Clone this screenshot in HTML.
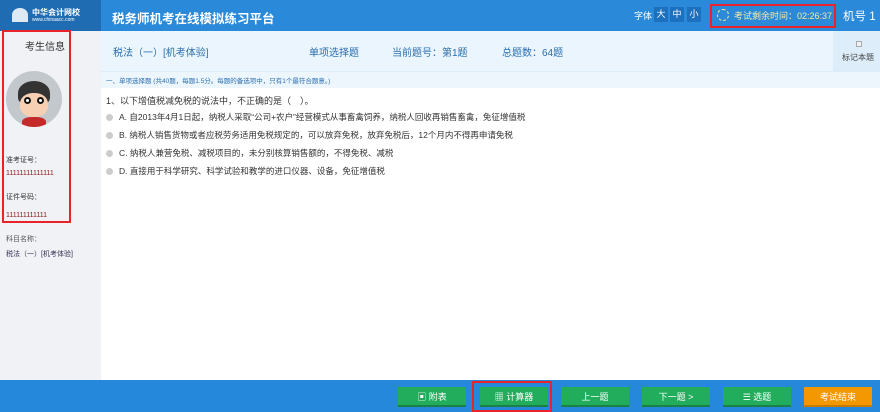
<!DOCTYPE html>
<html><head><meta charset="utf-8"><style>
*{margin:0;padding:0;box-sizing:border-box}
body{width:880px;height:412px;overflow:hidden;font-family:"Liberation Sans","Noto Sans CJK SC",sans-serif;background:#fff;position:relative;font-size:9px;color:#333}
.abs{position:absolute}
.hdr{left:0;top:0;width:880px;height:31px;background:#2a8ad9}
.logo{left:0;top:0;width:101px;height:31px;background:#1f6cb3}
.side{left:0;top:31px;width:101px;height:349px;background:#f0f2f5}
.bar{left:101px;top:31px;width:779px;height:40px;background:#eaf5fd;color:#2a6eb0;font-size:10px}
.sub{left:101px;top:71px;width:779px;height:17px;background:#eef6fd;border-top:1px solid #dcecf8;color:#2a6eb0;font-size:6.5px}
.foot{left:0;top:380px;width:880px;height:32px;background:#2688da}
.btn{position:absolute;top:387px;height:20px;width:68px;background:#22ad5c;color:#fff;font-size:9px;text-align:center;line-height:20px;border-bottom:2px solid #1b7f48}
.red{position:absolute;border:2px solid #e8242a}
.opt{left:106px;font-size:8.5px;color:#333}
.rad{display:inline-block;width:7px;height:7px;border-radius:50%;background:#ccc;margin-right:6px;vertical-align:-1px}
</style></head><body>
<div class="abs hdr"></div>
<div class="abs logo"></div>
<div class="abs" style="left:12px;top:8px;width:16px;height:14px;border-radius:50% 50% 0 0;background:#fff;opacity:.85"></div>
<div class="abs" style="left:32px;top:7px;color:#fff;font-size:8px;font-weight:bold">中华会计网校</div>
<div class="abs" style="left:32px;top:17px;color:#fff;font-size:5px">www.chinaacc.com</div>
<div class="abs" style="left:112px;top:8px;color:#fff;font-size:12.5px;font-weight:bold">税务师机考在线模拟练习平台</div>
<div class="abs" style="left:634px;top:9px;color:#fff;font-size:9px">字体</div>
<div class="abs" style="left:654px;top:7px;width:14px;height:15px;background:#1d70bd;color:#fff;font-size:9px;text-align:center;line-height:15px">大</div>
<div class="abs" style="left:670px;top:7px;width:14px;height:15px;background:#1d70bd;color:#fff;font-size:9px;text-align:center;line-height:15px">中</div>
<div class="abs" style="left:687px;top:7px;width:14px;height:15px;background:#1d70bd;color:#fff;font-size:9px;text-align:center;line-height:15px">小</div>
<div class="abs" style="left:717px;top:9px;width:12px;height:12px;border:1px dashed #f2e7a0;border-radius:50%"></div>
<div class="abs" style="left:734px;top:9px;color:#f5eaa0;font-size:9px">考试剩余时间：02:26:37</div>
<div class="red" style="left:710px;top:4px;width:126px;height:24px"></div>
<div class="abs" style="left:843px;top:8px;color:#fff;font-size:11.5px">机号 1</div>
<div class="abs side"></div>
<div class="abs" style="left:25px;top:38px;font-size:10px;color:#333">考生信息</div>
<div class="abs" style="left:6px;top:71px;width:56px;height:56px;border-radius:50%;background:#c3c8cd;overflow:hidden">
 <div class="abs" style="left:12px;top:10px;width:32px;height:24px;border-radius:50% 50% 30% 30%;background:#333"></div>
 <div class="abs" style="left:14px;top:22px;width:28px;height:24px;border-radius:45%;background:#f7cfb3"></div>
 <div class="abs" style="left:18px;top:26px;width:7px;height:7px;border-radius:50%;background:#fff;border:2px solid #111"></div>
 <div class="abs" style="left:31px;top:26px;width:7px;height:7px;border-radius:50%;background:#fff;border:2px solid #111"></div>
 <div class="abs" style="left:16px;top:46px;width:24px;height:12px;border-radius:40% 40% 0 0;background:#c52a2a"></div>
</div>
<div class="abs" style="left:6px;top:155px;font-size:7px">准考证号：</div>
<div class="abs" style="left:6px;top:170px;font-size:7px;color:#8b1a1a">11111111111111</div>
<div class="abs" style="left:6px;top:192px;font-size:7px">证件号码：</div>
<div class="abs" style="left:6px;top:212px;font-size:7px;color:#8b1a1a">111111111111</div>
<div class="red" style="left:2px;top:30px;width:69px;height:193px"></div>
<div class="abs" style="left:6px;top:234px;font-size:7px;color:#555">科目名称：</div>
<div class="abs" style="left:6px;top:249px;font-size:7px;color:#335">税法（一）[机考体验]</div>
<div class="abs bar"></div>
<div class="abs" style="left:113px;top:44px;color:#2a6eb0;font-size:10px">税法（一）[机考体验]</div>
<div class="abs" style="left:309px;top:44px;color:#2a6eb0;font-size:10px">单项选择题</div>
<div class="abs" style="left:392px;top:44px;color:#2a6eb0;font-size:10px">当前题号：第1题</div>
<div class="abs" style="left:502px;top:44px;color:#2a6eb0;font-size:10px">总题数：64题</div>
<div class="abs" style="left:833px;top:31px;width:47px;height:40px;background:#ddeefa"></div>
<div class="abs" style="left:856px;top:41px;width:6px;height:6px;border:1px solid #aaa;background:#f0f0f0"></div>
<div class="abs" style="left:842px;top:52px;font-size:8px;color:#444">标记本题</div>
<div class="abs sub"></div>
<div class="abs" style="left:106px;top:75px;font-size:6.5px;color:#2a6eb0">一、单项选择题 (共40题，每题1.5分。每题的备选项中，只有1个最符合题意。)</div>
<div class="abs" style="left:106px;top:94px;font-size:9px">1、以下增值税减免税的说法中，不正确的是（　）。</div>
<div class="abs opt" style="top:111px"><span class="rad"></span>A. 自2013年4月1日起，纳税人采取“公司+农户”经营模式从事畜禽饲养，纳税人回收再销售畜禽，免征增值税</div>
<div class="abs opt" style="top:129px"><span class="rad"></span>B. 纳税人销售货物或者应税劳务适用免税规定的，可以放弃免税，放弃免税后，12个月内不得再申请免税</div>
<div class="abs opt" style="top:147px"><span class="rad"></span>C. 纳税人兼营免税、减税项目的，未分别核算销售额的，不得免税、减税</div>
<div class="abs opt" style="top:165px"><span class="rad"></span>D. 直接用于科学研究、科学试验和教学的进口仪器、设备，免征增值税</div>
<div class="abs foot"></div>
<div class="btn" style="left:398px">▣ 附表</div>
<div class="btn" style="left:480px">▦ 计算器</div>
<div class="btn" style="left:561px">上一题</div>
<div class="btn" style="left:642px">下一题 &gt;</div>
<div class="btn" style="left:723px">☰ 选题</div>
<div class="btn" style="left:804px;background:#f39800;border-bottom-color:#c97a00">考试结束</div>
<div class="red" style="left:472px;top:381px;width:80px;height:31px"></div>
</body></html>
